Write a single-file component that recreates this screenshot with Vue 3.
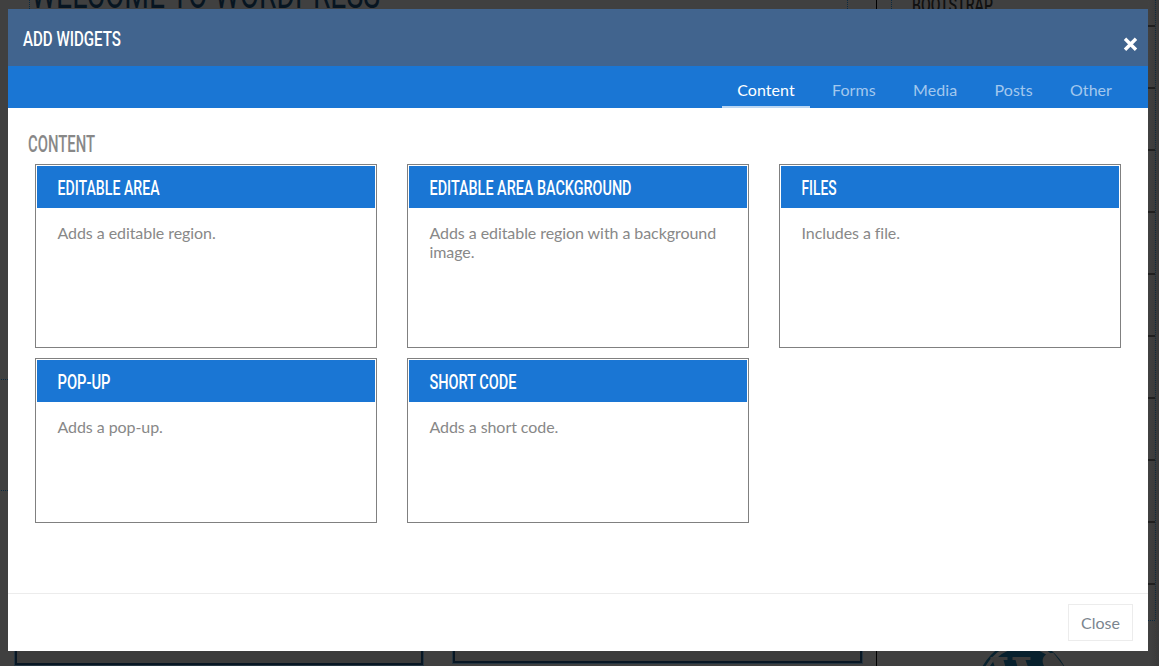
<script setup>
  import { ref, computed } from "vue"

  const tabs = ["Content", "Forms", "Media", "Posts", "Other"]
  const activeTab = ref("Content")

  // width is the drawn length of the condensed title
  const widgets = [
    { id: 1, tab: "Content", title: "EDITABLE AREA", width: 102, text: "Adds a editable region." },
    { id: 2, tab: "Content", title: "EDITABLE AREA BACKGROUND", width: 202, text: "Adds a editable region with a background image." },
    { id: 3, tab: "Content", title: "FILES", width: 35, text: "Includes a file." },
    { id: 4, tab: "Content", title: "POP-UP", width: 53, text: "Adds a pop-up." },
    { id: 5, tab: "Content", title: "SHORT CODE", width: 87, text: "Adds a short code." }
  ]

  const visibleWidgets = computed(() => widgets.filter(widget => widget.tab === activeTab.value))

  const rules = [25, 87, 149, 211, 273, 335, 397, 459, 521, 583]
</script>

<template>
  <div class="screen">
    <svg class="page" width="1159" height="666">
      <defs>
        <linearGradient id="shade" x1="0" x2="1" y1="0" y2="0">
          <stop offset="0" stop-color="#414141" />
          <stop offset="1" stop-color="#393939" />
        </linearGradient>
      </defs>
      <rect x="1148" width="11" height="666" fill="url(#shade)" />
      <text class="page-title" x="31" y="8" textLength="349" lengthAdjust="spacingAndGlyphs">WELCOME TO WORDPRESS</text>
      <text class="page-side" x="912" y="12" textLength="81" lengthAdjust="spacingAndGlyphs">BOOTSTRAP</text>
      <path class="dotted" d="M29.5 0V9M847.5 0V9M891.5 0V9M1155.5 0V620M1148 620.5H1156M1 379.5H8M1 490.5H8" />
      <path d="M876.5 0V666" stroke="#000" />
      <path v-for="y in rules" :key="y" :d="`M1148 ${y + 1}H1155`" stroke="#202020" stroke-width="2" />
      <rect x="16" y="600" width="406" height="64" class="box" />
      <rect x="14.5" y="600.5" width="409" height="65" class="dotted" />
      <rect x="454" y="600" width="407" height="62" class="box" />
      <rect x="452.5" y="600.5" width="410" height="63" class="dotted" />
      <g class="logo" transform="translate(1023.5 687)">
        <circle r="44.5" class="logo-ring" />
        <circle r="39.5" class="logo-disc" />
        <path class="logo-letter" d="M-33 -30H-16V-27H-20L-12 0H-22L-31 -27H-33ZM-11 -30H7V-27H2L12 0H0L-8 -27H-11ZM30 -34C22 -35 17 -29 20 -22L26 -10L25 0H44V-16Z" />
      </g>
    </svg>

    <div class="modal">
      <header class="modal-header">
        <svg class="heading" width="100" height="28">
          <text x="0" y="22" textLength="98" lengthAdjust="spacingAndGlyphs">ADD WIDGETS</text>
        </svg>
        <svg class="close-icon" width="16" height="16" viewBox="0 0 16 16">
          <path d="M3 2.8L14 13.8M14 2.8L3 13.8" />
        </svg>
      </header>

      <nav class="tabs">
        <button v-for="tab in tabs" :key="tab" class="tab" :class="{ active: tab === activeTab }"
        @click="activeTab = tab">{{ tab }}</button>
      </nav>

      <main class="modal-body">
        <svg class="section-title" width="100" height="28">
          <text x="0" y="22" textLength="67" lengthAdjust="spacingAndGlyphs">CONTENT</text>
        </svg>
        <div class="widgets">
          <div class="widget" v-for="widget in visibleWidgets" :key="widget.id">
            <div class="widget-title">
              <svg class="heading" :width="widget.width + 2" height="28">
                <text x="0.5" y="22" :textLength="widget.width" lengthAdjust="spacingAndGlyphs">{{ widget.title }}</text>
              </svg>
            </div>
            <p class="widget-text">{{ widget.text }}</p>
          </div>
        </div>
      </main>

      <footer class="modal-footer">
        <button class="close-button">Close</button>
      </footer>
    </div>
  </div>
</template>

<style>
  body {
    margin: 0;
    overflow: hidden;
  }
</style>

<style scoped>
  .screen {
    position: relative;
    box-sizing: border-box;
    width: 1159px;
    height: 666px;
    padding: 9px 11px 15px 8px;
    background-color: #404040;
    font-family: Lato, sans-serif;
    font-size: 16px;
    overflow: hidden;
  }

  .page {
    position: absolute;
    top: 0;
    left: 0;
  }

  .page-title {
    font: 400 42px Roboto, sans-serif;
    fill: #071521;
  }

  .page-side {
    font: 500 20px Roboto, sans-serif;
    fill: #101010;
  }

  .dotted {
    fill: none;
    stroke: #0c2a40;
    stroke-dasharray: 1 1;
  }

  .box {
    fill: #3b3b3b;
    stroke: #081724;
    stroke-width: 2;
  }

  .logo-ring {
    fill: none;
    stroke: #08212e;
    stroke-width: 2.5;
  }

  .logo-disc {
    fill: #08212e;
  }

  .logo-letter {
    fill: #3b3b3b;
  }

  .modal {
    position: relative;
    display: flex;
    flex-direction: column;
    height: 642px;
    background-color: white;
  }

  .modal-header {
    display: flex;
    justify-content: space-between;
    box-sizing: border-box;
    height: 57px;
    padding: 15px 10px 0 15px;
    background-color: #41648e;
  }

  .heading {
    display: block;
    overflow: visible;
    fill: white;
    font: 500 21px Roboto, sans-serif;
  }

  .close-icon {
    margin-top: 12px;
    stroke: white;
    stroke-width: 3.4;
  }

  .tabs {
    display: flex;
    justify-content: flex-end;
    gap: 7.4px;
    height: 42px;
    padding-right: 21px;
    background-color: #1a76d4;
  }

  .tab {
    padding: 7px 15px 0;
    border: 0;
    border-bottom: 2px solid transparent;
    background: none;
    color: #a3c8ee;
    font: 16px Lato, sans-serif;
    letter-spacing: 0.05px;
    cursor: pointer;
  }

  .tab.active {
    border-color: #bad6f2;
    color: white;
  }

  .modal-body {
    flex: 1;
    padding: 22px 27px 0 20px;
  }

  .section-title {
    display: block;
    overflow: visible;
    fill: #888;
    font: 500 24px Roboto, sans-serif;
  }

  .widgets {
    display: grid;
    grid-template-columns: repeat(3, 342px);
    grid-template-rows: 184px 165px;
    gap: 10px 30px;
    margin: 6px 0 0 7px;
  }

  .widget {
    padding: 1px;
    border: 1px solid #808080;
  }

  .widget-title {
    box-sizing: border-box;
    height: 42px;
    padding: 7px 20px 0;
    background-color: #1a76d4;
  }

  .widget-text {
    margin: 0;
    padding: 15px 20px 16px 20.5px;
    color: #888;
    line-height: 19px;
    letter-spacing: -0.07px;
  }

  .modal-footer {
    display: flex;
    justify-content: flex-end;
    box-sizing: border-box;
    height: 58px;
    padding: 10px 15px;
    border-top: 1px solid #ececec;
  }

  .close-button {
    width: 65px;
    height: 37px;
    padding: 0;
    border: 1px solid #ececec;
    background-color: white;
    color: #7b858e;
    font: 16px Lato, sans-serif;
  }
</style>
